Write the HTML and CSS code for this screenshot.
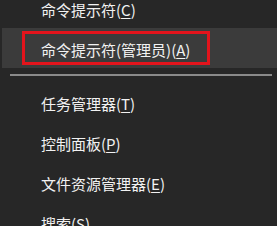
FILE: index.html
```html
<!DOCTYPE html>
<html lang="zh-CN">
<head>
<meta charset="utf-8">
<link rel="stylesheet" href="styles.css">
</head>
<body>
<div class="menu">
  <div class="item">命令提示符(<u>C</u>)</div>
  <div class="item active">命令提示符(管理员)(<u>A</u>)<span class="mark"></span></div>
  <div class="sep"></div>
  <div class="item">任务管理器(<u>T</u>)</div>
  <div class="item">控制面板(<u>P</u>)</div>
  <div class="item">文件资源管理器(<u>E</u>)</div>
  <div class="item">搜索(<u>S</u>)</div>
</div>
</body>
</html>
```
FILE: styles.css
```css
html, body {
  margin: 0;
  padding: 0;
  background: #272727;
  overflow: hidden;
}
.menu {
  margin-top: -12px;
  font-family: "Noto Sans CJK SC", "Noto Sans", sans-serif;
  font-size: 15px;
  color: #f2f2f2;
}
.item {
  position: relative;
  height: 40px;
  box-sizing: border-box;
  padding-top: 3px;
  display: flex;
  align-items: center;
  padding-left: 41px;
  white-space: nowrap;
}
.item u {
  text-decoration-thickness: 1px;
  text-underline-offset: 2px;
}
.active {
  background: #3b3b3b;
  margin-left: 2px;
  padding-left: 39px;
}
.mark {
  position: absolute;
  left: 20px;
  top: 3px;
  width: 182px;
  height: 28px;
  border: 3px solid #e3141c;
}
.sep {
  height: 14px;
  display: flex;
  align-items: center;
  padding: 0 5px 0 10px;
}
.sep::before {
  content: "";
  flex: 1;
  height: 2px;
  background: #8a8a8a;
}
```
